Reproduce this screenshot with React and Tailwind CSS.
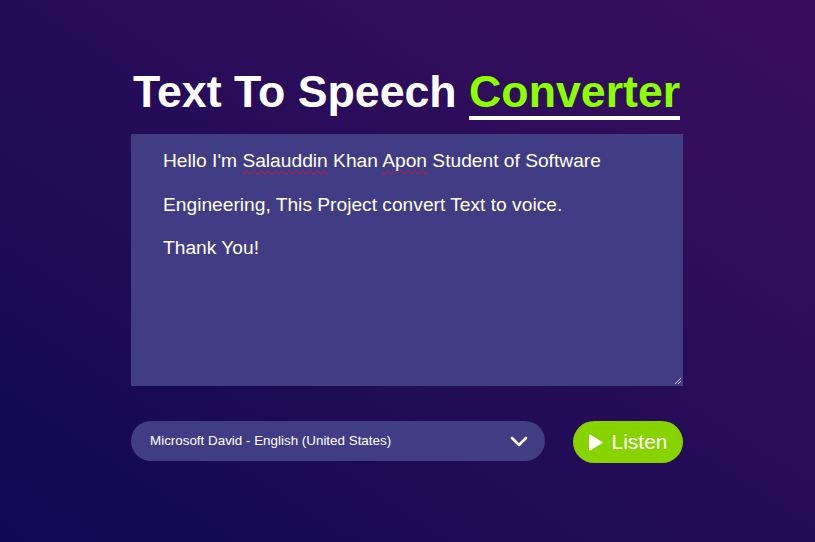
import React from 'react';

const voices = ['Microsoft David - English (United States)'];

const App = () => {
    return (
        <div
            className="w-full h-[542px] overflow-hidden bg-gradient-to-tr from-[#0e0852] to-[#3b0d5f] pl-[131px]"
            style={{ fontFamily: '"Liberation Sans", Arial, sans-serif' }}
        >
            <div className="w-[552px] pt-[67px]">
                {/* heading */}
                <h1 className="text-[44.7px] leading-[50px] font-bold text-white whitespace-nowrap pl-[2px]">
                    Text To Speech{' '}
                    <span className="text-[#8cff00] inline-block border-b-4 border-white leading-[48px]">Converter</span>
                </h1>

                {/* textarea */}
                <div className="relative mt-[14px] h-[252px] bg-[#403d84] text-white text-[19.2px] leading-[43.5px] px-[32px] pt-[5px]">
                    <p>
                        Hello I'm{' '}
                        <span className="underline decoration-wavy decoration-[#e0102a] decoration-1 underline-offset-[3px]">Salauddin</span>{' '}
                        Khan{' '}
                        <span className="underline decoration-wavy decoration-[#e0102a] decoration-1 underline-offset-[3px]">Apon</span>{' '}
                        Student of Software Engineering, This Project convert Text to voice.
                    </p>
                    <p>Thank You!</p>
                    <svg className="absolute right-[1px] bottom-[1px]" width="8" height="8" viewBox="0 0 8 8">
                        <path d="M7 1 L1 7 M7 4 L4 7" stroke="#c8c8d8" strokeWidth="1" />
                    </svg>
                </div>

                {/* controls */}
                <div className="flex items-start justify-between mt-[35px]">
                    <div className="w-[414px] h-[40px] rounded-full bg-[#403d84] flex items-center justify-between pl-[19px] pr-[17px] text-white">
                        <span className="text-[13.4px]">{voices[0]}</span>
                        <svg width="18" height="12" viewBox="0 0 18 12" fill="none">
                            <path d="M2 3 L9 10 L16 3" stroke="white" strokeWidth="2.6" strokeLinecap="round" strokeLinejoin="round" />
                        </svg>
                    </div>
                    <button className="w-[110px] h-[42px] rounded-full bg-[#86d300] flex items-center justify-center gap-[8px] text-white text-[21px]">
                        <svg width="15" height="17" viewBox="0 0 15 17">
                            <path d="M2 1.5 L13.5 8.5 L2 15.5 Z" fill="white" stroke="white" strokeWidth="2" strokeLinejoin="round" />
                        </svg>
                        <span>Listen</span>
                    </button>
                </div>
            </div>
        </div>
    );
};

export default App;
